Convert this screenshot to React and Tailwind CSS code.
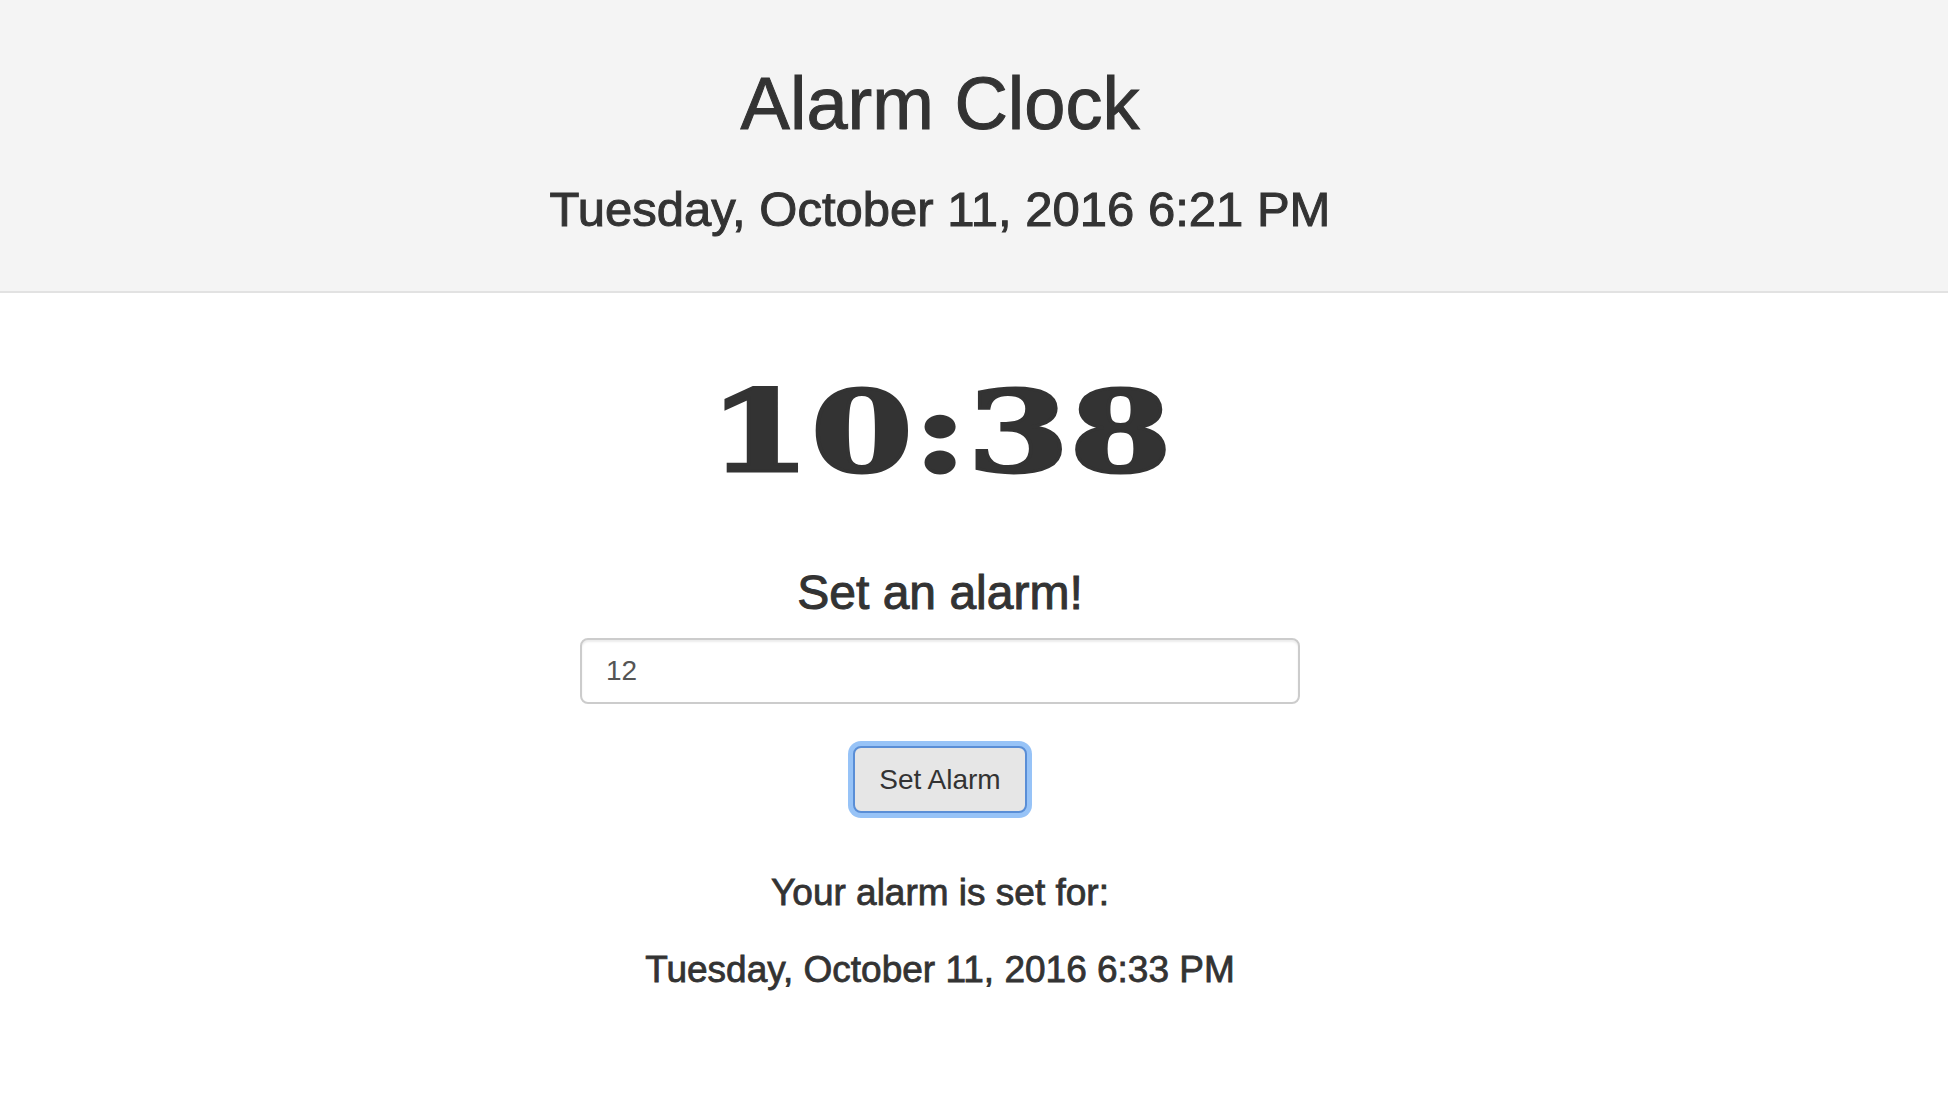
import React, { useState } from "react";

const AlarmClock = () => {
    const [hour, setHour] = useState("12");

    return (
        <div className="min-h-screen bg-white text-[#333]" style={{ fontFamily: '"Liberation Sans", Arial, sans-serif' }}>
            {/* Header */}
            <div className="bg-[#f4f4f4] border-b-2 border-[#e2e2e2]">
                <div className="w-[1880px] text-center pt-[63px] pb-[54px]">
                    <h1 className="text-[74px] leading-[1.1] font-medium [-webkit-text-stroke:1px_#333]">Alarm Clock</h1>
                    <h3 className="mt-[39px] text-[49px] leading-[1.1] font-medium [-webkit-text-stroke:1px_#333]">
                        Tuesday, October 11, 2016 6:21 PM
                    </h3>
                </div>
            </div>

            {/* Clock + form */}
            <div className="w-[1880px] flex flex-col items-center">
                <div
                    className="mt-[82px] text-[113px] leading-none font-bold scale-x-[1.3] [-webkit-text-stroke:3px_#333]"
                    style={{ fontFamily: '"DejaVu Serif", serif' }}
                >
                    10:38
                </div>

                <h3 className="mt-[79px] text-[48px] leading-[1.1] font-medium [-webkit-text-stroke:1px_#333]">Set an alarm!</h3>

                <input
                    type="text"
                    value={hour}
                    onChange={(e) => setHour(e.target.value)}
                    className="mt-[18px] w-[720px] h-[66px] border-2 border-[#ccc] rounded-[8px] px-[24px] text-[28px] text-[#555] bg-white shadow-[inset_0_2px_2px_rgba(0,0,0,0.075)] outline-none"
                />

                <button className="mt-[42px] w-[174px] h-[67px] bg-[#e6e6e6] border-2 border-[#5a8ed6] rounded-[8px] text-[28px] text-[#333] shadow-[0_0_0_5px_#97c3f7]">
                    Set Alarm
                </button>

                <h4 className="mt-[60px] text-[37px] leading-[1.1] font-medium [-webkit-text-stroke:0.8px_#333]">Your alarm is set for:</h4>
                <h4 className="mt-[36px] text-[37px] leading-[1.1] font-medium [-webkit-text-stroke:0.8px_#333]">
                    Tuesday, October 11, 2016 6:33 PM
                </h4>
            </div>
        </div>
    );
};

export default AlarmClock;
